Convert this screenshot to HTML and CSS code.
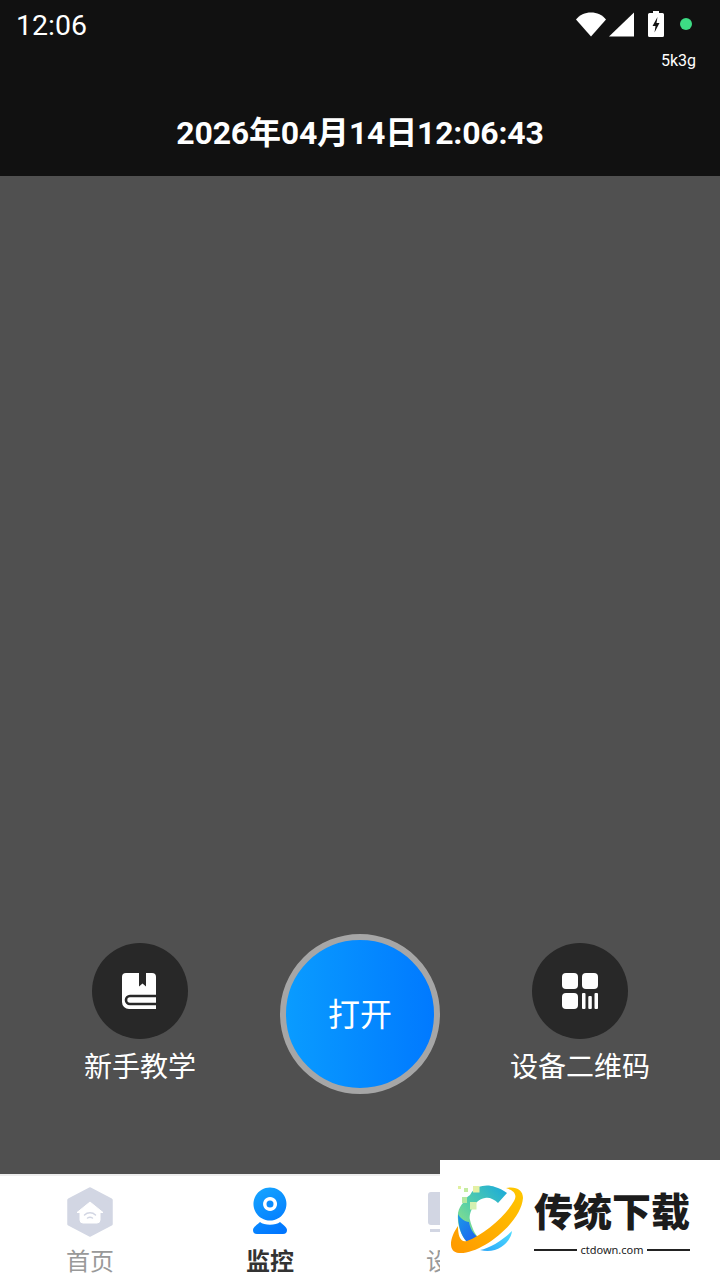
FILE: index.html
```html
<!DOCTYPE html>
<html lang="zh-CN">
<head>
    <meta charset="UTF-8">
    <meta name="viewport" content="width=device-width, initial-scale=1.0">
    <title>监控</title>
    <link rel="stylesheet" href="styles.css">
</head>
<body>

<div class="app">
    <header class="top">
        <div class="status">
            <span class="clock">12:06</span>
            <div class="status-icons">
                <svg width="30" height="25" viewBox="0 0 30 25"><path d="M15 24.500L0 7.500C3.500 3 9 .5 15 .5S26.500 3 30 7.500Z" fill="#fff"/></svg>
                <svg width="25" height="25" viewBox="0 0 25 25"><path d="M25 .5V24.500H0Z" fill="#fff"/></svg>
                <svg class="battery" width="16" height="26" viewBox="0 0 16 26"><path d="M5 0H11V2H14.500A1.500 1.500 0 0 1 16 3.500V24.500A1.500 1.500 0 0 1 14.500 26H1.500A1.500 1.500 0 0 1 0 24.500V3.500A1.500 1.500 0 0 1 1.500 2H5Z" fill="#fff"/><path d="M9.500 6L4.500 15H7.500L6.500 21.500L11.500 12H8.500Z" fill="#111"/></svg>
                <span class="dot"></span>
            </div>
        </div>
        <div class="speed">5k3g</div>
        <h1 class="date">2026年04月14日12:06:43</h1>
    </header>

    <main class="preview">
        <div class="controls">
            <div class="side">
                <div class="side-icon">
                    <svg class="book" width="34" height="36" viewBox="0 0 34 36">
                        <path d="M4 0H30A4 4 0 0 1 34 4V36H7A7 7 0 0 1 0 29V4A4 4 0 0 1 4 0Z" fill="#fff"/>
                        <path d="M34 23H8A4 4 0 0 0 8 31H34" fill="none" stroke="#282828" stroke-width="2.600"/>
                        <path d="M17 0H24V13.500L20.500 10.500L17 13.500Z" fill="#282828"/>
                    </svg>
                </div>
                <span class="side-label">新手教学</span>
            </div>
            <button class="open-btn" type="button">打开</button>
            <div class="side">
                <div class="side-icon">
                    <svg width="36" height="36" viewBox="0 0 36 36" fill="#fff">
                        <rect width="16" height="16" rx="4"/>
                        <rect x="20" width="16" height="16" rx="4"/>
                        <rect y="20" width="16" height="16" rx="4"/>
                        <rect x="20" y="20" width="3.500" height="16" rx="1"/>
                        <rect x="26.300" y="23" width="3.500" height="13" rx="1"/>
                        <rect x="32.500" y="20" width="3.500" height="16" rx="1"/>
                    </svg>
                </div>
                <span class="side-label">设备二维码</span>
            </div>
        </div>
    </main>

    <nav class="tabs">
        <a class="tab">
            <span class="tab-icon">
                <svg width="46" height="50" viewBox="0 0 46 50">
                    <path d="M23 2L44 13V37L23 48L2 37V13Z" fill="#d2d6e3" stroke="#d2d6e3" stroke-width="3.500" stroke-linejoin="round"/>
                    <path d="M23 15L36 25.500H33V33A3 3 0 0 1 30 36H16A3 3 0 0 1 13 33V25.500H10Z" fill="#fff" stroke="#fff" stroke-linejoin="round"/>
                    <path d="M17.500 28C20.500 25 25.500 25 28.500 28M20.500 31C22 30 24 30 25.500 31" fill="none" stroke="#d2d6e3" stroke-width="1.500" stroke-linecap="round"/>
                </svg>
            </span>
            <span class="tab-label">首页</span>
        </a>
        <a class="tab tab-active">
            <span class="tab-icon">
                <svg width="34" height="47" viewBox="0 0 34 47">
                    <defs>
                        <linearGradient id="camFill" x1="0.300" y1="0" x2="0.700" y2="1">
                            <stop offset="0" stop-color="#14a2ff"/>
                            <stop offset="1" stop-color="#0076ff"/>
                        </linearGradient>
                    </defs>
                    <path d="M17 .5A16.500 16.500 0 1 1 16.900 .5ZM17 10A7 7 0 1 0 17.100 10ZM7 35C11 38.500 23 38.500 27 35C30 38 34 40 34 43A4 4 0 0 1 30 47H4A4 4 0 0 1 0 43C0 40 4 38 7 35Z" fill="url(#camFill)" fill-rule="evenodd"/>
                    <circle cx="17" cy="17" r="3.500" fill="#0a8cff"/>
                </svg>
            </span>
            <span class="tab-label">监控</span>
        </a>
        <a class="tab">
            <span class="tab-icon">
                <svg width="44" height="46" viewBox="0 0 44 46">
                    <path d="M3 5H41A3 3 0 0 1 44 8V35A3 3 0 0 1 41 38H3A3 3 0 0 1 0 35V8A3 3 0 0 1 3 5Z" fill="#d2d6e3"/>
                    <circle cx="22" cy="21" r="8" fill="none" stroke="#fff" stroke-width="4"/>
                    <rect x="2" y="42" width="40" height="3" fill="#d2d6e3"/>
                </svg>
            </span>
            <span class="tab-label">设备</span>
        </a>
    </nav>

    <div class="watermark">
        <svg class="wm-logo" width="85" height="80" viewBox="0 0 85 80">
            <defs>
                <linearGradient id="arcFill" x1="0" y1="1" x2="1" y2="0">
                    <stop offset="0" stop-color="#a6e87e"/>
                    <stop offset="0.450" stop-color="#55cfa8"/>
                    <stop offset="1" stop-color="#17a8de"/>
                </linearGradient>
                <linearGradient id="ringFill" x1="0" y1="1" x2="1" y2="0">
                    <stop offset="0" stop-color="#ff9800"/>
                    <stop offset="1" stop-color="#ffc800"/>
                </linearGradient>
                <linearGradient id="moonFill" x1="0" y1="1" x2="1" y2="0">
                    <stop offset="0" stop-color="#2aa6f8"/>
                    <stop offset="1" stop-color="#50dcff"/>
                </linearGradient>
                <linearGradient id="lowFill" x1="0" y1="0" x2="1" y2="1">
                    <stop offset="0" stop-color="#1a9ae8"/>
                    <stop offset="1" stop-color="#1f5cf0"/>
                </linearGradient>
            </defs>
            <path d="M13 33C14 28 16 25 18 23C20 19 22 17 25 15C27 11 30 8 33 7C39 5 45 5 50 7C54 8 58 10 62 13L53 23C49 19 44 17 40 18C34 19 30 23 28 27C25 32 24 37 25 40C27 48 30 54 33 57L22 62C15 54 12 44 13 33Z" fill="url(#arcFill)"/>
            <path d="M13 34C13 46 16 56 22 62L34 58C28 54 25 48 24 42C20 42 15 38 13 34Z" fill="url(#lowFill)"/>
            <path d="M13 46C5 57 2 72 14 73C34 75 76 44 78 18C78 10 71 6 61 8C68 10 73 14 69 21C60 37 38 55 22 61C15 63 13 55 13 46Z" fill="url(#ringFill)"/>
            <path d="M35 70C45 68 58 60 67 51C66 62 52 75 35 70Z" fill="url(#moonFill)"/>
            <rect x="13" y="6" width="3" height="3" fill="#e0f0a0"/>
            <rect x="19" y="8" width="4" height="4" fill="#c4eca0"/>
            <rect x="28" y="6" width="6.500" height="6.500" fill="#e4f0a4"/>
            <rect x="17" y="17" width="5" height="6" fill="#b4e8a0"/>
            <rect x="25" y="22" width="6.500" height="7.500" fill="#d4f0b0"/>
        </svg>
        <div class="wm-text">
            <div class="wm-title">传统下载</div>
            <div class="wm-url">ctdown.com</div>
        </div>
    </div>
</div>

</body>
</html>
```

FILE: styles.css
```css
* {
    box-sizing: border-box;
}

body {
    margin: 0;
    font-family: Roboto, 'Noto Sans CJK SC', sans-serif;
}

.app {
    position: relative;
    width: 720px;
    height: 1280px;
    display: flex;
    flex-direction: column;
    overflow: hidden;
    background-color: #505050;
}

/* top bar */
.top {
    height: 176px;
    flex: none;
    background-color: #111;
    color: #fff;
}

.status {
    height: 48px;
    padding: 0 28px 0 16px;
    display: flex;
    align-items: center;
    justify-content: space-between;
}

.clock {
    padding-top: 4px;
    font-size: 28.500px;
    line-height: 48px;
}

.status-icons {
    display: flex;
    align-items: center;
    gap: 3px;
}

.battery {
    margin-left: 11px;
}

.dot {
    width: 12px;
    height: 12px;
    margin-left: 13px;
    border-radius: 50%;
    background-color: #3ddc84;
}

.speed {
    height: 22px;
    padding: 2px 24px 0 0;
    text-align: right;
    font-size: 16px;
    line-height: 22px;
}

.date {
    margin: 41px 0 0;
    text-align: center;
    font-size: 32px;
    line-height: 44px;
    font-weight: 700;
    letter-spacing: -0.200px;
}

/* camera area */
.preview {
    flex: 1;
    display: flex;
    flex-direction: column;
    justify-content: flex-end;
    padding-bottom: 80px;
}

.controls {
    display: grid;
    grid-template-columns: 280px 160px 280px;
}

.side {
    padding-top: 9px;
    display: flex;
    flex-direction: column;
    align-items: center;
}

.side-icon {
    width: 96px;
    height: 96px;
    border-radius: 50%;
    background-color: #282828;
    display: flex;
    align-items: center;
    justify-content: center;
}

.book {
    margin-right: 2px;
}

.side-label {
    margin-top: 10px;
    font-size: 28px;
    line-height: 38px;
    color: #fff;
}

.open-btn {
    width: 160px;
    height: 160px;
    padding: 0 0 4px;
    border: 6px solid #a6a6a6;
    border-radius: 50%;
    background: linear-gradient(90deg, #0a9dff, #0078ff);
    background-origin: border-box;
    color: #fff;
    font-family: inherit;
    font-size: 32px;
}

/* bottom tabs */
.tabs {
    height: 106px;
    flex: none;
    padding-top: 11px;
    border-top: 2px solid #eee;
    background-color: #fff;
    display: grid;
    grid-template-columns: repeat(4, 180px);
}

.tab {
    display: flex;
    flex-direction: column;
    align-items: center;
}

.tab-icon {
    height: 50px;
    display: flex;
    align-items: flex-start;
    justify-content: center;
}

.tab-label {
    margin-top: 9px;
    font-size: 24px;
    line-height: 32px;
    color: #999;
}

.tab-active .tab-label {
    font-weight: 700;
    color: #333;
}

/* site watermark over the corner */
.watermark {
    position: absolute;
    right: 0;
    bottom: 0;
    width: 280px;
    height: 120px;
    padding: 20px 0 0 5px;
    background-color: #fff;
    display: flex;
}

.wm-text {
    width: 156px;
    margin-left: 4px;
}

.wm-title {
    margin-top: 8px;
    font-size: 39px;
    line-height: 50px;
    font-weight: 900;
    white-space: nowrap;
    color: #1c1c1c;
}

.wm-url {
    margin-top: 4px;
    display: flex;
    align-items: center;
    gap: 3px;
    font-family: 'Noto Sans', sans-serif;
    font-size: 11px;
    line-height: 16px;
    color: #222;
}

.wm-url::before,
.wm-url::after {
    content: "";
    flex: 1;
    height: 2px;
    background-color: #222;
}
```
